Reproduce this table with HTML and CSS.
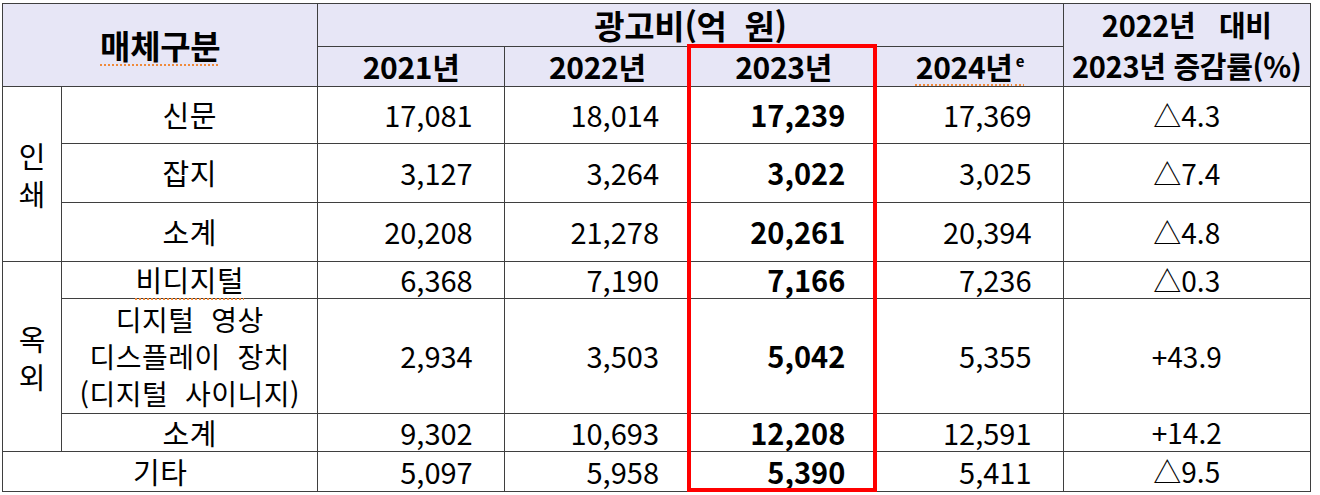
FILE: index.html
```html
<!DOCTYPE html>
<html lang="ko">
<head>
<meta charset="utf-8">
<link rel="stylesheet" href="styles.css">
</head>
<body>
<div class="wrap">
<table class="ad">
<colgroup>
<col class="c-grp"><col class="c-lbl"><col class="c-y"><col class="c-y"><col class="c-y"><col class="c-y"><col class="c-rate">
</colgroup>
<thead>
<tr class="h1">
<th colspan="2" rowspan="2" class="big"><span class="spell">매체구분</span></th>
<th colspan="4" class="big">광고비(억&nbsp;&nbsp;원)</th>
<th rowspan="2" class="rate-h">2022년&nbsp;&nbsp;&nbsp;대비<br>2023년 증감률(%)</th>
</tr>
<tr class="h2">
<th>2021년</th>
<th>2022년</th>
<th>2023년</th>
<th><span class="spell">2024년<sup>e</sup></span></th>
</tr>
</thead>
<tbody>
<tr class="r1">
<td rowspan="3" class="grp">인<br>쇄</td>
<td class="lbl">신문</td>
<td class="num">17,081</td><td class="num">18,014</td><td class="num b">17,239</td><td class="num">17,369</td><td class="rate">△4.3</td>
</tr>
<tr class="r2">
<td class="lbl">잡지</td>
<td class="num">3,127</td><td class="num">3,264</td><td class="num b">3,022</td><td class="num">3,025</td><td class="rate">△7.4</td>
</tr>
<tr class="r3">
<td class="lbl">소계</td>
<td class="num">20,208</td><td class="num">21,278</td><td class="num b">20,261</td><td class="num">20,394</td><td class="rate">△4.8</td>
</tr>
<tr class="r4">
<td rowspan="3" class="grp">옥<br>외</td>
<td class="lbl"><span class="spell">비디지털</span></td>
<td class="num">6,368</td><td class="num">7,190</td><td class="num b">7,166</td><td class="num">7,236</td><td class="rate">△0.3</td>
</tr>
<tr class="r5">
<td class="lbl multi">디지털&nbsp;&nbsp;영상<br>디스플레이&nbsp;&nbsp;장치<br>(디지털&nbsp;&nbsp;사이니지)</td>
<td class="num">2,934</td><td class="num">3,503</td><td class="num b">5,042</td><td class="num">5,355</td><td class="rate">+43.9</td>
</tr>
<tr class="r6">
<td class="lbl">소계</td>
<td class="num">9,302</td><td class="num">10,693</td><td class="num b">12,208</td><td class="num">12,591</td><td class="rate">+14.2</td>
</tr>
<tr class="r7">
<td colspan="2" class="lbl">기타</td>
<td class="num">5,097</td><td class="num">5,958</td><td class="num b">5,390</td><td class="num">5,411</td><td class="rate">△9.5</td>
</tr>
</tbody>
</table>
<div class="hl"></div>
</div>
</body>
</html>
```

FILE: styles.css
```css
html, body {
  margin: 0;
  padding: 0;
  background: #ffffff;
}
body {
  padding: 3px 0 0 2px;
  font-family: "Noto Sans CJK KR", "Noto Sans", sans-serif;
  color: #000;
}
.wrap {
  position: relative;
  width: 1309px;
}
.ad {
  border-collapse: collapse;
  table-layout: fixed;
  width: 1309px;
  font-size: 28px;
  line-height: 1.1;
}
.c-grp { width: 59px; }
.c-lbl { width: 256px; }
.c-y { width: 186px; }
.c-rate { width: 247px; }
.ad th, .ad td {
  border: 1.5px solid #3f3f3f;
  padding: 0;
  vertical-align: middle;
}
.ad th {
  background: #e7e6f6;
  font-weight: 700;
  font-size: 30px;
  text-align: center;
  letter-spacing: -0.3px;
}
.ad th.big { font-size: 33px; }
.h1 { height: 41px; }
.h2 { height: 39px; }
.ad th.rate-h { line-height: 41px; font-size: 29px; }
.spell {
  text-decoration: underline dotted #f08a3a;
  text-underline-offset: 6px;
  text-decoration-thickness: 1.5px;
}
sup {
  font-size: 15px;
  vertical-align: 12px;
  line-height: 0;
  margin-left: 3px;
}
.num {
  text-align: right;
  font-size: 29px;
  padding-right: 31px !important;
}
.b { font-weight: 700; }
.lbl, .rate, .grp { text-align: center; }
.lbl { font-size: 29px; letter-spacing: 0.5px; }
.rate { font-size: 28px; }
.grp { line-height: 38px; font-size: 29px; }
.multi { line-height: 37px; font-size: 28px; }
.r1 { height: 57px; }
.r2 { height: 59px; }
.r3 { height: 59px; }
.r4 { height: 37px; }
.r5 { height: 115px; }
.r6 { height: 38px; }
.r7 { height: 40px; }
.hl {
  position: absolute;
  left: 685px;
  top: 41px;
  width: 190px;
  height: 448px;
  border: 4px solid #ff0000;
  box-sizing: border-box;
  pointer-events: none;
}
```
